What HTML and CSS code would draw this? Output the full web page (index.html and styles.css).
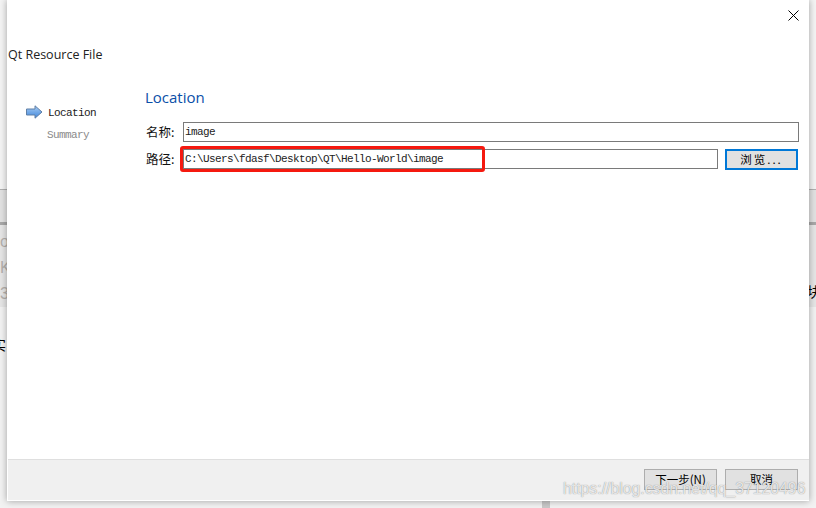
FILE: index.html
```html
<!DOCTYPE html>
<html lang="zh-CN">
<head>
    <meta charset="UTF-8">
    <meta name="viewport" content="width=device-width, initial-scale=1.0">
    <title>Qt Resource File</title>
    <link rel="stylesheet" href="styles.css">
</head>
<body>
    <!-- page that shows behind the dialog -->
    <div class="backdrop">
        <div class="band band-top"></div>
        <div class="band band-grey"></div>
        <div class="band band-dark"></div>
        <div class="band band-text">
            <span class="back-line">os</span>
            <span class="back-line">K,</span>
            <span class="back-line">3</span>
        </div>
        <div class="band band-low">
            <span class="back-cjk back-left">实</span>
            <span class="back-cjk back-right">块</span>
        </div>
        <div class="back-block"></div>
    </div>

    <div class="dialog">
        <button class="close" aria-label="close">
            <svg width="11" height="11" viewBox="0 0 11 11">
                <path d="M0.5 0.5 L10.5 10.5 M10.5 0.5 L0.5 10.5" stroke="#000" stroke-width="1" fill="none"/>
            </svg>
        </button>
        <div class="title">Qt Resource File</div>

        <div class="main">
            <ul class="steps">
                <li class="step step-active">
                    <svg class="step-arrow" width="17" height="15" viewBox="0 0 17 15">
                        <defs>
                            <linearGradient id="arrowFill" x1="0" y1="0" x2="0" y2="1">
                                <stop offset="0" stop-color="#a9cdf3"/>
                                <stop offset="1" stop-color="#3f86dc"/>
                            </linearGradient>
                        </defs>
                        <path d="M0.5 4 H9 V0.8 L16 7 L9 13.2 V10 H0.5 Z" fill="url(#arrowFill)" stroke="#5f7fa6" stroke-width="1"/>
                    </svg>
                    Location
                </li>
                <li class="step">Summary</li>
            </ul>

            <div class="form">
                <h2 class="heading">Location</h2>
                <div class="row">
                    <label class="label">名称:</label>
                    <div class="input">image</div>
                </div>
                <div class="row">
                    <label class="label">路径:</label>
                    <div class="input input-path">
                        C:\Users\fdasf\Desktop\QT\Hello-World\image
                        <div class="highlight"></div>
                    </div>
                    <button class="btn btn-focus">浏览...</button>
                </div>
            </div>
        </div>

        <div class="footer">
            <button class="btn">下一步(N)</button>
            <button class="btn">取消</button>
        </div>
    </div>

    <div class="watermark">https://blog.csdn.net/qq_37120496</div>
</body>
</html>
```

FILE: styles.css
```css
* {
    margin: 0;
    padding: 0;
    box-sizing: border-box;
}

html, body {
    width: 816px;
    height: 508px;
    overflow: hidden;
}

body {
    position: relative;
    background: #fff;
    font-family: "Liberation Mono", "Noto Sans CJK SC", monospace;
    color: #000;
}

/* backdrop */
.backdrop {
    height: 508px;
    display: flex;
    flex-direction: column;
    position: relative;
}

.band-top {
    height: 190px;
    background: #f4f4f4;
    border-bottom: 1px solid #b0b0b0;
}

.band-grey {
    height: 32px;
    background: #e2e2e2;
}

.band-dark {
    height: 3px;
    background: #a8a8a8;
}

.band-text {
    height: 82px;
    background: #e6e6e6;
    display: flex;
    flex-direction: column;
    gap: 8px;
    padding-top: 8px;
    color: #b5b0ac;
    font-family: "Liberation Sans", sans-serif;
    font-size: 16px;
    line-height: 18px;
}

.band-low {
    flex: 1;
    background: #f2f2f2;
    position: relative;
    font-family: "Noto Sans CJK SC", sans-serif;
    font-size: 14px;
}

.back-cjk {
    position: absolute;
}

.back-left {
    left: -8px;
    top: 27px;
}

.back-right {
    left: 807px;
    top: -26px;
}

.back-block {
    position: absolute;
    left: 542px;
    top: 500px;
    width: 8px;
    height: 8px;
    background: #c8c8c8;
}

/* dialog */
.dialog {
    position: absolute;
    left: 7px;
    top: 0;
    width: 802px;
    height: 501px;
    background: #fff;
    display: flex;
    flex-direction: column;
    box-shadow: 0 0 7px rgba(0, 0, 0, 0.35);
}

.close {
    position: absolute;
    left: 781px;
    top: 10px;
    width: 11px;
    height: 11px;
    border: none;
    background: none;
    display: flex;
}

.title {
    padding: 46px 0 0 1px;
    height: 83px;
    font-family: "Open Sans", sans-serif;
    font-size: 12.5px;
    line-height: 18px;
    color: #222;
}

.main {
    flex: 1;
    display: flex;
}

.steps {
    list-style: none;
    width: 139px;
    padding: 21px 0 0 19px;
    font-size: 11px;
    letter-spacing: -0.6px;
}

.step {
    height: 22px;
    line-height: 18px;
    padding-left: 21px;
    color: #8a8a8a;
    display: flex;
    align-items: flex-start;
}

.step-active {
    color: #222;
    padding-left: 0;
    gap: 5px;
}

.step-arrow {
    flex: none;
    margin-top: 1px;
}

.form {
    flex: 1;
    padding-right: 10px;
}

.heading {
    font-family: "Open Sans", sans-serif;
    font-weight: 400;
    font-size: 15px;
    line-height: 20px;
    color: #0a4fa8;
    margin: 4px 0 15px -1px;
}

.row {
    display: flex;
    align-items: flex-start;
    height: 27px;
}

.label {
    width: 37px;
    flex: none;
    font-family: "Noto Sans CJK SC", sans-serif;
    font-size: 12.5px;
    line-height: 20px;
    color: #111;
}

.input {
    flex: 1;
    height: 20px;
    border: 1px solid #7a7a7a;
    font-size: 11px;
    letter-spacing: -0.6px;
    line-height: 18px;
    padding-left: 1px;
    background: #fff;
    color: #222;
}

.input-path {
    position: relative;
    flex: none;
    width: 535px;
}

.highlight {
    position: absolute;
    left: -4px;
    top: -4px;
    width: 305px;
    height: 26px;
    border: 3px solid #f5190f;
    border-radius: 3px;
}

.btn {
    width: 73px;
    height: 21px;
    background: #e1e1e1;
    border: 1px solid #adadad;
    font-family: "Noto Sans CJK SC", sans-serif;
    font-size: 11.5px;
    line-height: 17px;
    color: #000;
}

.btn-focus {
    margin-left: 7px;
    border: 2px solid #0078d7;
    letter-spacing: 2px;
}

.footer {
    height: 41px;
    margin: 0 0 1px 1px;
    background: #f0f0f0;
    border-top: 1px solid #dfdfdf;
    display: flex;
    justify-content: flex-end;
    align-items: flex-start;
    gap: 8px;
    padding: 9px 11px 0 0;
}

.watermark {
    position: absolute;
    left: 563px;
    top: 480px;
    font-family: "Liberation Sans", sans-serif;
    font-size: 15.8px;
    line-height: 18px;
    color: rgba(255, 255, 255, 0.8);
    text-shadow: 0 0 1px rgba(90, 90, 90, 0.8);
    white-space: nowrap;
}
```
